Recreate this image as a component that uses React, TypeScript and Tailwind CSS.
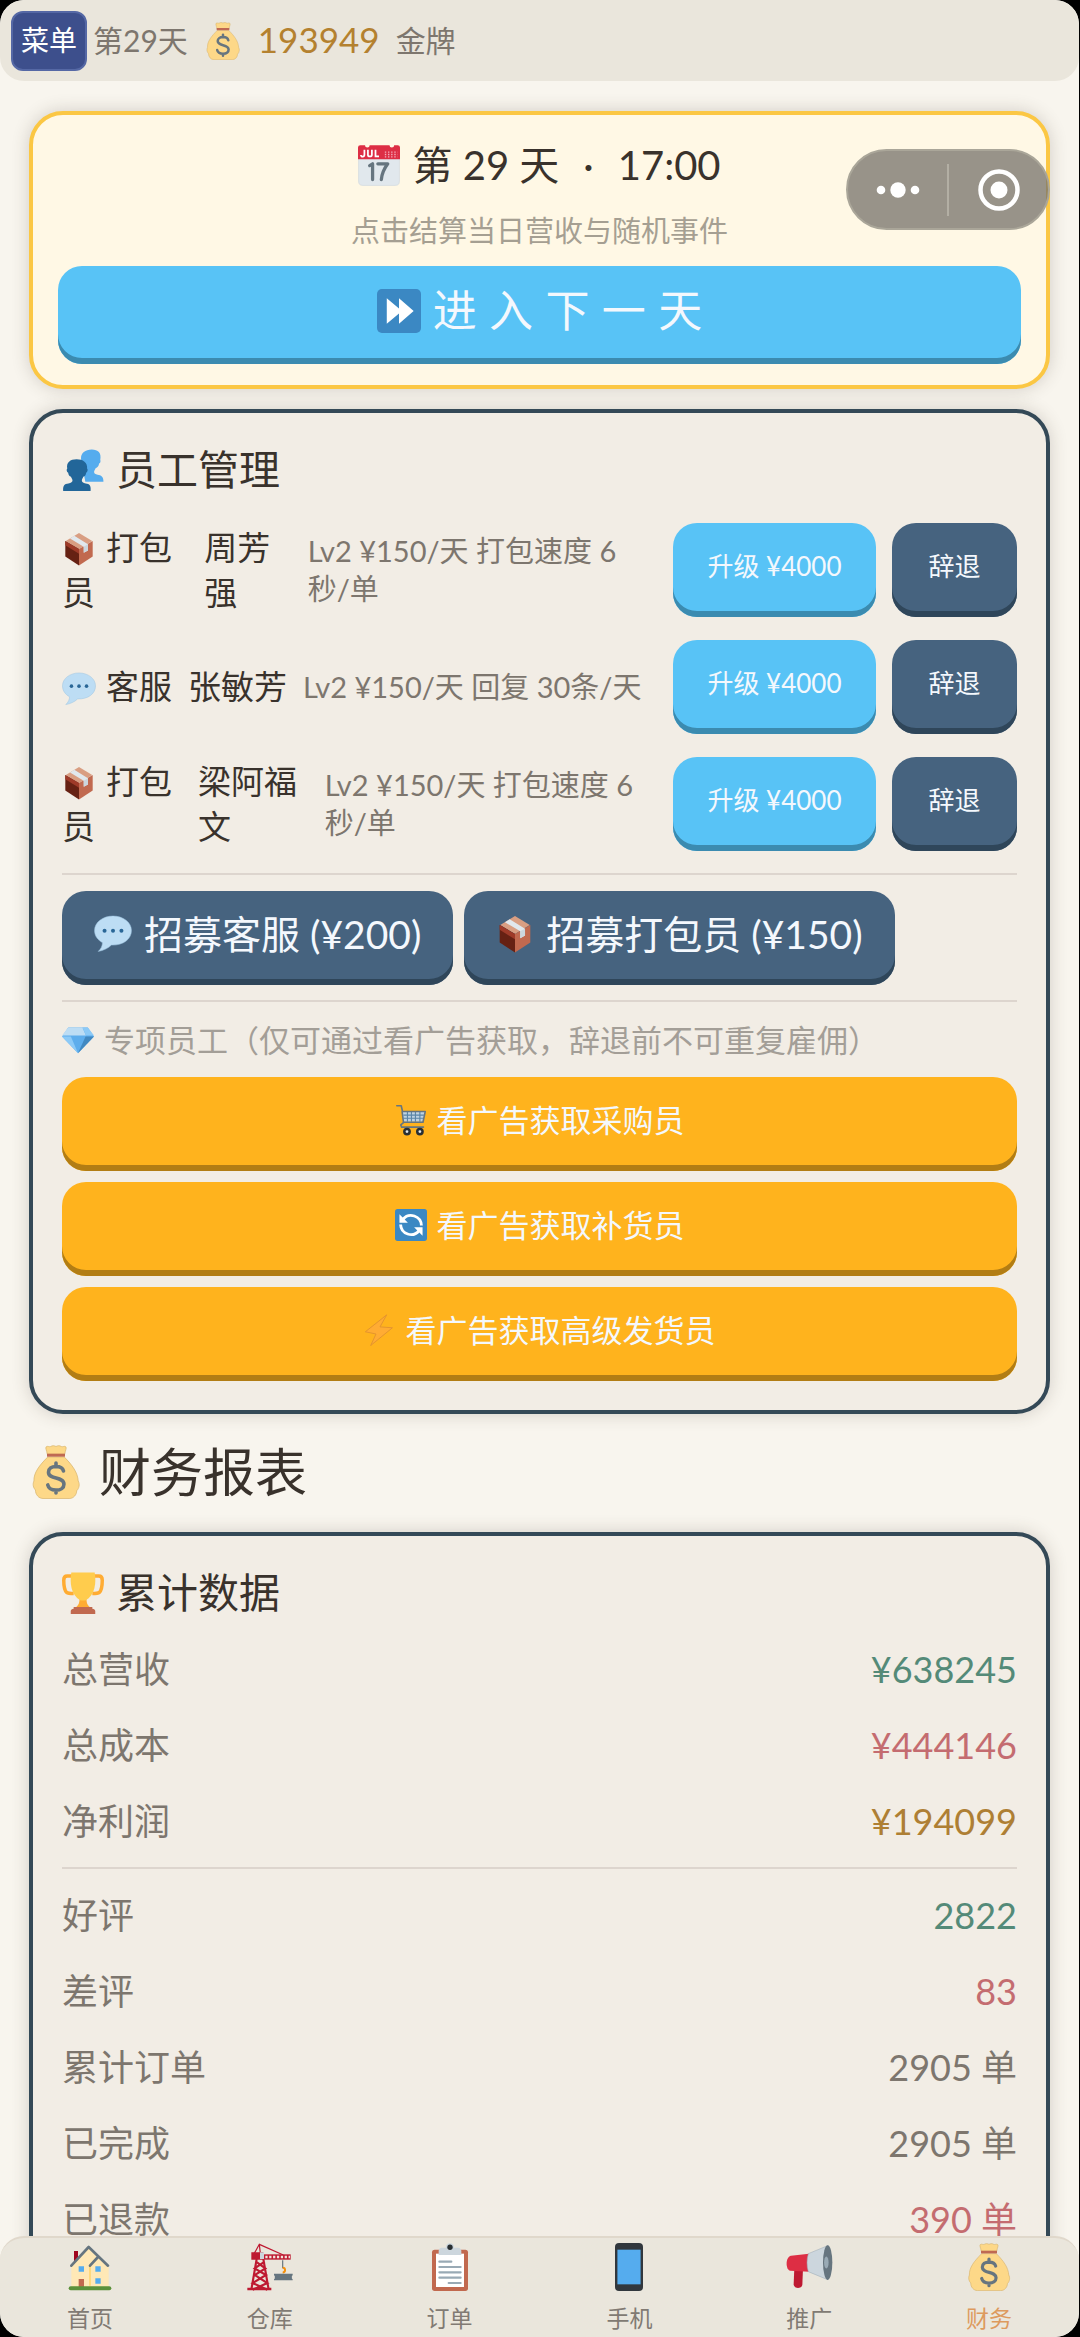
import type { ReactNode } from 'react'

const Svg = ({ className, children }: { className: string, children: ReactNode }) => (
  <svg viewBox="0 0 36 36" className={`shrink-0 ${className}`} aria-hidden="true">{children}</svg>
)

const MoneyBag = ({ className }: { className: string }) => (
  <Svg className={className}>
    <path fill="#FDD888" stroke="#D9B56C" strokeWidth=".5" d="M12.500 8C7 13.500 3 18.500 3.300 24c-1 2-.5 4.500 1 6 0 3 2 5.500 5 5.700h17.500c3 0 5-2.700 5-5.200 1.700-1.700 2.200-4.500 1-6.500C32.500 18.500 29 13.500 23.500 8z" />
    <path fill="#FDD888" stroke="#D9B56C" strokeWidth=".5" d="M11.500 1.200c1-.8 2 .3 3-.2 1.200-.8 2.300-.6 3.500 0 1.200-.6 2.300-.8 3.500 0 1 .5 2-.6 3 .2.8.8-.3 2.300-.7 5H12.200c-.4-2.700-1.500-4.200-.7-5z" />
    <path fill="#BF6952" d="M12 5.800h12v2H12z" />
    <path fill="none" stroke="#67757F" strokeWidth="2.400" strokeLinecap="round" d="M23 17.300c-.5-2-2.300-3-5-3-3 0-5 1.400-5 3.800 0 5.200 10.300 2.600 10.300 8 0 2.500-2.200 4-5.300 4-3 0-5-1.300-5.500-3.500M18 12v2.500M18 30v2" />
  </Svg>
)

const Calendar = ({ className }: { className: string }) => (
  <Svg className={className}>
    <path fill="#E1E8ED" stroke="#CBD5DC" strokeWidth=".5" d="M.5 12h35v20a3.500 3.500 0 0 1-3.500 3.500H4A3.500 3.500 0 0 1 .5 32z" />
    <path fill="#DD2E44" d="M2 1h4a2 2 0 0 0 4 0h17a2 2 0 0 0 4 0h3a2 2 0 0 1 2 2v10H0V3a2 2 0 0 1 2-2z" />
    <path fill="none" stroke="#fff" strokeWidth="1.500" d="M5.500 5v4.200c0 2-3 2-3 .3M8.500 5v4.200c0 2 3.400 2 3.400 0V5M15 5v5.700h3" />
    <path stroke="#F4ABBA" strokeWidth="1.100" strokeDasharray="1.200 1.500" d="M23 7h11M23 9h11M23 11h11" />
    <path fill="none" stroke="#66757F" strokeWidth="2.800" strokeLinecap="round" strokeLinejoin="round" d="M10 18.500l2.500-1.500v13.500M17 17h8.500c-3 4-5 8-5.500 13.500" />
  </Svg>
)

const FastForward = ({ className }: { className: string }) => (
  <Svg className={className}>
    <rect width="36" height="36" rx="4" fill="#3B88C3" />
    <path fill="#fff" d="M8 7.500L18 16V7.500L30 18 18 28.500V20L8 28.500z" />
  </Svg>
)

const People = ({ className }: { className: string }) => (
  <Svg className={className}>
    <path fill="#55ACEE" d="M35.500 27.500c0-4-2-5-5-5.500-2-.4-3-1-3-2.300 0-1.200.8-1.800 1.300-3.200 1.700-.5 2.700-2 3-4 1-.3 1.500-1.500 1-3.200C34 3.500 31 .5 25.500.5S16 3.500 16.300 8.500L20 28h15.500z" />
    <path fill="#226699" d="M1 36c-.3-5 1.200-6 4.500-6.500 2.300-.4 3.500-1.200 3.500-2.500 0-1-.7-1.700-1.300-3.200-1.300-.5-2.200-1.500-2.400-3.500-1.200-.5-1.800-2.500-.8-3.600C3.500 11.500 7 8.700 12.500 8.700S22 11.500 21.500 16.700c1 1 .3 3.100-.8 3.600-.2 2-1.100 3-2.500 3.500-.5 1.500-1.200 2.200-1.200 3.200 0 1.300 1 2.100 3.300 2.500 3.200.5 4.700 1.500 4.200 6.500z" />
  </Svg>
)

const Parcel = ({ className }: { className: string }) => (
  <Svg className={className}>
    <path fill="#D99E82" d="M4 9.500L18 1l14 8.500L18 18z" />
    <path fill="#662113" d="M3.500 9.500L18 18v17.500L3.500 26z" />
    <path fill="#9E3A28" d="M3.500 9.500L18 18v5L3.500 14z" />
    <path fill="#C1694F" d="M32.500 9.500L18 18v17.500L32.500 26z" />
    <path fill="#E1E8ED" d="M8.500 6.800l4.500-2.800 14.500 9v6.500l-4.500 2.500v-6.500z" />
    <path fill="#CCD6DD" d="M23 15.500l4.500-2.500v6.500L23 22z" />
  </Svg>
)

const Speech = ({ className }: { className: string }) => (
  <Svg className={className}>
    <path fill="#BDDDF4" stroke="#9CC3DF" strokeWidth=".5" d="M18 1C8.300 1 .5 7 .5 14.700c0 5 3 9 7.500 11.500 0 3-1.500 6-4 8.300 5-.8 9.500-3 12.500-6 11 .5 19-5.500 19-13.800C35.500 7 27.700 1 18 1z" />
    <g fill="#2A6797"><circle cx="10" cy="15" r="1.900" /><circle cx="18" cy="15" r="1.900" /><circle cx="26" cy="15" r="1.900" /></g>
  </Svg>
)

const Gem = ({ className }: { className: string }) => (
  <Svg className={className}>
    <path fill="#5DADEC" d="M7 4h22l7 10-18 19L0 14z" />
    <path fill="#BDDDF4" d="M7 4h8l-5 9H0zM15 4h8l4 9H10z" />
    <path fill="#8CCAF7" d="M23 4h6l7 9h-9z" />
    <path fill="#4289C1" d="M26.500 14H36L18 33z" />
    <path fill="#8CCAF7" d="M0 14h10l8 19z" />
  </Svg>
)

const Cart = ({ className }: { className: string }) => (
  <Svg className={className}>
    <path fill="#BFD3E2" d="M9 9h25l-3 11H9z" />
    <path fill="none" stroke="#5B86A8" strokeWidth="1.300" d="M9.500 12.500h23M9.500 16h22.500M14 9v11M18.500 9v11M23 9v11M28 9v11" />
    <path fill="none" stroke="#66757F" strokeWidth="1.800" strokeLinecap="round" strokeLinejoin="round" d="M2 2h5l1.500 6.500H34l-2.500 12H9.500L8 8.500M9.500 21L6.500 23.500 7.500 26H32" />
    <g fill="#E1E8ED" stroke="#292F33" strokeWidth="2.800"><circle cx="13.500" cy="31" r="3" /><circle cx="28" cy="31" r="3" /></g>
  </Svg>
)

const Refresh = ({ className }: { className: string }) => (
  <Svg className={className}>
    <rect width="36" height="36" rx="3" fill="#3B88C3" />
    <path fill="none" stroke="#fff" strokeWidth="3.200" d="M9 11.500a11.700 11.700 0 0 1 20.700 7M27 24.500A11.700 11.700 0 0 1 6.300 17.500" />
    <path fill="#fff" d="M5 6v9.500h9.500zM31 30v-9.500h-9.500z" />
  </Svg>
)

const Bolt = ({ className }: { className: string }) => (
  <Svg className={className}>
    <path fill="#FFAC33" stroke="#E0912F" strokeWidth="1" strokeLinejoin="round" d="M25.500 1L1.500 20l12 2.500-6 13L32 15.500l-14-1z" />
  </Svg>
)

const Trophy = ({ className }: { className: string }) => (
  <Svg className={className}>
    <path fill="none" stroke="#FFAC33" strokeWidth="3" d="M9 3.500H4.500c-2 0-3 1-3 3.500 0 5 .5 8.500 2.500 10.500 1 .8 3 1 6 1M27 3.500h4.500c2 0 3 1 3 3.500 0 5-.5 8.500-2.500 10.500-1 .8-3 1-6 1" />
    <path fill="#FFAC33" d="M15 23h6c0 4 1 6 4 8H11c3-2 4-4 4-8z" />
    <path fill="#FFCC4D" d="M8 .5h20C29.500 9 28.500 20 20 24.500h-4C7.500 20 6.500 9 8 .5z" />
    <path fill="#C1694F" d="M10 30h16v1.500c1.500 0 2.500 1 2.500 2V36h-21v-2.500c0-1 1-2 2.500-2z" />
  </Svg>
)

const House = ({ className }: { className: string }) => (
  <Svg className={className}>
    <path fill="#A0041E" d="M6 6h3v8H6z" />
    <path fill="#FFE8B6" d="M4 17L17 4l7.500 7.500L32 18v15H4z" />
    <path stroke="#FFCC4D" strokeWidth=".8" d="M18 17v15" />
    <path fill="none" stroke="#66757F" strokeWidth="2" strokeLinecap="round" strokeLinejoin="round" d="M4 17L17 3l14.500 14M18 17l6-6.500" />
    <path fill="#55ACEE" d="M9.500 17.500h4v4h-4zM22 17.500h4v4h-4zM22 26.500h4v4h-4z" />
    <path fill="#C1694F" d="M9.500 27h4v6h-4z" />
    <rect x="2" y="32.500" width="32" height="3" rx="1.500" fill="#5C913B" />
  </Svg>
)

const Crane = ({ className }: { className: string }) => (
  <Svg className={className}>
    <path fill="none" stroke="#BE1931" strokeWidth="1.600" d="M8 12L4 35M13 12l4 23M7.500 14l7 5-8 5 9.500 6-11 5M14 14l-7.500 5 8.500 5-10 6 11 5" />
    <path fill="none" stroke="#BE1931" strokeWidth=".9" d="M5 10L10 1l18 8M10 1l1 9" />
    <path fill="#BE1931" d="M4 7h9v5.500H4zM1 33.500h18v2H1z" />
    <path fill="#BE1931" d="M13 8.500h20.500v4H13z" />
    <path stroke="#F4E3DD" strokeWidth="1.700" strokeDasharray="1.700 1.200" d="M14.500 10.500h18.500" />
    <path fill="#CCD6DD" d="M10.500 7h3v5h-3z" />
    <path stroke="#66757F" strokeWidth=".9" d="M27.500 13v6" />
    <path fill="none" stroke="#F4900C" strokeWidth="1.500" d="M27.500 18.500a1.800 1.800 0 1 1 0 3.600" />
    <path fill="#66757F" d="M21 23h14v1.200l-.6.600v1.800l.6.600V28H21v-.8l.6-.6v-1.800l-.6-.6z" />
  </Svg>
)

const Clipboard = ({ className }: { className: string }) => (
  <Svg className={className}>
    <rect x="4.500" y="5" width="27" height="31" rx="2" fill="#C1694F" />
    <path fill="#fff" d="M7.500 8h21v25h-21z" />
    <path fill="#CCD6DD" d="M9.500 9V6c0-1.500 1-2.500 2.500-2.500h3C15 1.500 16 .2 18 .2s3 1.300 3 3.300h3c1.500 0 2.500 1 2.500 2.500v3z" />
    <circle cx="18" cy="3.200" r="2" fill="#292F33" />
    <path stroke="#99AAB5" strokeWidth="1.600" strokeLinecap="round" d="M10 14h9M10 18h16M10 22h16M10 26h16M17 30h9" />
  </Svg>
)

const Phone = ({ className }: { className: string }) => (
  <Svg className={className}>
    <rect x="7.500" width="21" height="36" rx="3" fill="#31373D" />
    <path fill="#55ACEE" d="M9.300 5h17.400v26H9.300z" />
  </Svg>
)

const Megaphone = ({ className }: { className: string }) => (
  <Svg className={className}>
    <path fill="#BE1931" d="M7 19h6.500l-.5 12.500c-.5 3-6.500 3-6.500-.5z" />
    <path fill="#DD2E44" d="M4.500 9.500L18 8v13.500l-14-.7C.2 20 .2 10.300 4.500 9.500z" />
    <path fill="#CCD6DD" stroke="#9BAAB5" strokeWidth=".4" d="M17.500 8L32 2v25.500L17.500 21.500c-1.300-4-1.300-9.500 0-13.500z" />
    <ellipse cx="32" cy="14.700" rx="3.500" ry="13" fill="#66757F" />
    <ellipse cx="31" cy="14.700" rx="1.700" ry="4.500" fill="#99AAB5" />
  </Svg>
)

const cardClass = 'rounded-[34px] border-4 shadow-[0_0_18px_rgba(60,50,40,0.2)]'
const btnClass = 'flex items-center justify-center rounded-3xl pb-2 text-[#f4f8fd]'
const blueBtn = 'bg-[#58c3f6] shadow-[inset_0_-6px_0_#3b8bb0]'
const navyBtn = 'bg-[#46637f] shadow-[inset_0_-6px_0_#2f465a]'

const staff = [
  { Icon: Parcel, role: '打包员', name: '周芳强', info: 'Lv2 ¥150/天 打包速度 6秒/单' },
  { Icon: Speech, role: '客服', name: '张敏芳', info: 'Lv2 ¥150/天 回复 30条/天' },
  { Icon: Parcel, role: '打包员', name: '梁阿福文', info: 'Lv2 ¥150/天 打包速度 6秒/单' },
]

const ads = [
  { Icon: Cart, label: '看广告获取采购员' },
  { Icon: Refresh, label: '看广告获取补货员' },
  { Icon: Bolt, label: '看广告获取高级发货员' },
]

const money = [
  { label: '总营收', value: '¥638245', color: 'text-[#548a78]' },
  { label: '总成本', value: '¥444146', color: 'text-[#c46c70]' },
  { label: '净利润', value: '¥194099', color: 'text-[#ae7f34]' },
]

const counts = [
  { label: '好评', value: '2822', color: 'text-[#548a78]' },
  { label: '差评', value: '83', color: 'text-[#c46c70]' },
  { label: '累计订单', value: '2905 单', color: 'text-[#7d766e]' },
  { label: '已完成', value: '2905 单', color: 'text-[#7d766e]' },
  { label: '已退款', value: '390 单', color: 'text-[#c46c70]' },
]

const tabs = [
  { Icon: House, label: '首页' },
  { Icon: Crane, label: '仓库' },
  { Icon: Clipboard, label: '订单' },
  { Icon: Phone, label: '手机' },
  { Icon: Megaphone, label: '推广' },
  { Icon: MoneyBag, label: '财务', active: true },
]

const StatList = ({ rows }: { rows: typeof money }) => (
  <dl className="text-[36px] text-[#7d766e]">
    {rows.map((r) => (
      <div key={r.label} className="flex h-[76px] items-center justify-between">
        <dt>{r.label}</dt>
        <dd className={r.color}>{r.value}</dd>
      </div>
    ))}
  </dl>
)

export default function App() {
  return (
    <div className="h-screen bg-black pr-px font-['Lato','Noto_Sans_CJK_SC',sans-serif] leading-none text-[#39322c]">
      <div className="relative flex h-full flex-col overflow-hidden rounded-3xl bg-[#f8f5ee]">
        <header className="flex h-[81px] shrink-0 items-center rounded-3xl bg-[#eae6dc] px-[11px] text-[30px] text-[#7d766e]">
          <button className="h-[60px] w-[76px] rounded-xl border-2 border-[#5568a5] bg-[#3d4f8c] pb-0.5 text-[28px] text-white">菜单</button>
          <span className="ml-1.5 pb-0.5">第29天</span>
          <MoneyBag className="ml-4 size-[38px]" />
          <span className="ml-4 pb-0.5 text-[35px] text-[#b4812f]">193949</span>
          <span className="ml-4 pb-0.5">金牌</span>
        </header>

        {/* mini program capsule floats over the page */}
        <div className="absolute top-[149px] right-[29px] z-10 flex h-[81px] w-[204px] items-center rounded-full border-2 border-[#aaa699] bg-[#75716a]/75">
          <button aria-label="更多" className="flex flex-1 justify-center">
            <svg viewBox="0 0 44 16" className="h-4 w-11" fill="#fff">
              <circle cx="5" cy="8" r="4.300" /><circle cx="22" cy="8" r="7.700" /><circle cx="39" cy="8" r="4.300" />
            </svg>
          </button>
          <span className="h-[52px] w-0.5 bg-[#b3afa4]" />
          <button aria-label="关闭" className="flex flex-1 justify-center">
            <svg viewBox="0 0 44 44" className="size-11">
              <circle cx="22" cy="22" r="18.500" fill="none" stroke="#fff" strokeWidth="4.500" />
              <circle cx="22" cy="22" r="8.500" fill="#fff" />
            </svg>
          </button>
        </div>

        <main className="min-h-0 flex-1 overflow-y-auto px-[29px] pt-[30px] pb-6 [scrollbar-width:none]">
          <section className={`${cardClass} border-[#fbc744] bg-[#fff8e5] px-[25px] pt-[22px] pb-[21px]`}>
            <h2 className="flex items-center justify-center gap-3 text-[40px] leading-[56px]">
              <Calendar className="size-[42px]" />
              <span className="flex gap-6">
                <span>第 29 天</span>
                <span>·</span>
                <span>17:00</span>
              </span>
            </h2>
            <p className="mt-[18px] text-center text-[29px] leading-10 text-[#a59f92]">点击结算当日营收与随机事件</p>
            <button className={`${btnClass} ${blueBtn} mt-[15px] h-[98px] w-full gap-3 text-[44px]`}>
              <FastForward className="size-11" />
              <span className="font-['Inter','Noto_Sans_CJK_SC',sans-serif]">进 入 下 一 天</span>
            </button>
          </section>

          <section className={`${cardClass} mt-5 border-[#344957] bg-[#f2ede5] p-[29px]`}>
            <h2 className="flex items-center gap-3 text-[41px] leading-[56px]">
              <People className="size-[42px]" />员工管理
            </h2>
            <ul className="mt-[25px] flex flex-col gap-[23px]">
              {staff.map((s) => (
                <li key={s.name} className="flex items-center gap-4">
                  <div className="flex min-w-0 flex-1 items-center gap-4">
                    <span className="text-[33px] leading-[45px]">
                      <s.Icon className="mr-2.5 mb-1 inline-block size-[34px]" />{s.role}
                    </span>
                    <span className="text-[33px] leading-[45px]">{s.name}</span>
                    <span className="pr-[14px] text-[29px] leading-[38px] text-[#7d766e]">{s.info}</span>
                  </div>
                  <button className={`${btnClass} ${blueBtn} h-[94px] w-[203px] shrink-0 text-[26px]`}>升级 ¥4000</button>
                  <button className={`${btnClass} ${navyBtn} h-[94px] w-[125px] shrink-0 text-[26px]`}>辞退</button>
                </li>
              ))}
            </ul>
            <hr className="mt-[22px] border-t-2 border-[#ddd5ce]" />
            <div className="mt-4 flex gap-[11px] text-[39px]">
              <button className={`${btnClass} ${navyBtn} h-[94px] gap-3 px-8`}>
                <Speech className="size-[38px]" />招募客服 (¥200)
              </button>
              <button className={`${btnClass} ${navyBtn} h-[94px] gap-3 px-8`}>
                <Parcel className="size-[38px]" />招募打包员 (¥150)
              </button>
            </div>
            <hr className="mt-[15px] border-t-2 border-[#ddd5ce]" />
            <p className="mt-4 flex items-center gap-2.5 text-[31px] leading-[44px] text-[#a39e97]">
              <Gem className="size-8" />专项员工（仅可通过看广告获取，辞退前不可重复雇佣）
            </p>
            <div className="mt-[15px] flex flex-col gap-[11px]">
              {ads.map((a) => (
                <button key={a.label} className={`${btnClass} h-[94px] w-full gap-2.5 bg-[#ffb31d] text-[31px] shadow-[inset_0_-6px_0_#b27d14]`}>
                  <a.Icon className="size-8" />{a.label}
                </button>
              ))}
            </div>
          </section>

          <h1 className="mt-7 mb-[30px] flex items-center gap-4 text-[52px] leading-[60px]">
            <MoneyBag className="size-[54px]" />财务报表
          </h1>

          <section className={`${cardClass} border-[#344957] bg-[#f2ede5] p-[29px]`}>
            <h2 className="flex items-center gap-3 text-[41px] leading-[56px]">
              <Trophy className="size-[42px]" />累计数据
            </h2>
            <div className="mt-[10px]">
              <StatList rows={money} />
              <hr className="my-2 border-t-2 border-[#ddd5ce]" />
              <StatList rows={counts} />
            </div>
          </section>
        </main>

        <nav className="relative z-10 -mt-6 grid h-[101px] shrink-0 grid-cols-6 rounded-3xl border-t-2 border-[#e0d8cb] bg-[#eae6dc]">
          {tabs.map((t) => (
            <button key={t.label} className={`flex flex-col items-center gap-4 pt-[5px] text-[23px] ${t.active ? 'text-[#dd9a5e]' : 'text-[#817a73]'}`}>
              <t.Icon className="size-12" />{t.label}
            </button>
          ))}
        </nav>
      </div>
    </div>
  )
}
